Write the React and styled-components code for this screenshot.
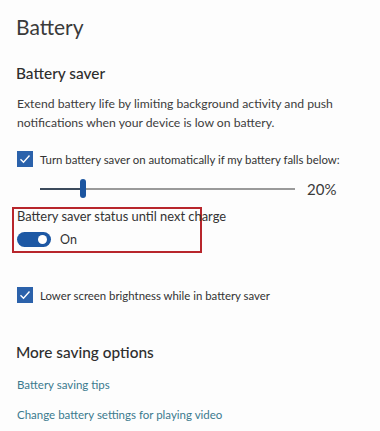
import React from "react";
import styled, { createGlobalStyle } from "styled-components";

const Global = createGlobalStyle`
  body {
    margin: 0;
    background: #fdfdfd;
    font-family: Lato, "Noto Sans", sans-serif;
    color: #333;
  }
`;

const Page = styled.div`
  width: 380px;
  height: 431px;
  padding: 12px 0 0 16px;
  box-sizing: border-box;
  overflow: hidden;
`;

const Title = styled.h1`
  margin: 0;
  font-size: 21px;
  line-height: 30px;
  font-weight: 400;
  color: #3a3a3a;
`;

const Heading = styled.h2`
  margin: ${(p) => p.$top}px 0 0;
  font-size: 15.4px;
  line-height: 22px;
  font-weight: 500;
  color: #2e2e2e;
`;

const Desc = styled.p`
  margin: 10px 0 0 1px;
  font-size: 12.2px;
  line-height: 19px;
  color: #3c3c3c;
  white-space: nowrap;
`;

const CheckRow = styled.label`
  display: flex;
  align-items: center;
  gap: 7px;
  height: 20px;
  margin: ${(p) => p.$top}px 0 0 1px;
  font-size: 11.4px;
  color: #333;
  white-space: nowrap;
`;

const Box = styled.span`
  width: 16px;
  height: 16px;
  background: #2b62ab;
  display: flex;
  align-items: center;
  justify-content: center;
  flex: none;
`;

const SliderRow = styled.div`
  display: flex;
  align-items: center;
  height: 20px;
  margin: 10px 0 0 24px;
`;

const Track = styled.div`
  position: relative;
  width: 255px;
  height: 2px;
  background: #9a9a9a;
`;

const Filled = styled.div`
  height: 100%;
  background: #3c4a5c;
`;

const Thumb = styled.div`
  position: absolute;
  top: -9px;
  width: 6px;
  height: 19px;
  border-radius: 3px;
  background: #1c55a0;
`;

const Value = styled.span`
  margin-left: 12px;
  font-size: 15px;
  color: #3a3a3a;
`;

const Highlight = styled.div`
  width: 190px;
  box-sizing: border-box;
  margin: 8px 0 0 -4px;
  border: 2px solid #b8262c;
  padding: 0 0 4px 3px;
`;

const Label = styled.div`
  font-size: 12.9px;
  line-height: 15px;
  color: #333;
  white-space: nowrap;
`;

const ToggleRow = styled.div`
  display: flex;
  align-items: center;
  gap: 9px;
  margin-top: 8px;
  font-size: 12.5px;
  color: #333;
`;

const Toggle = styled.span`
  position: relative;
  width: 34px;
  height: 15px;
  border-radius: 8px;
  background: #1d58a4;
  &::after {
    content: "";
    position: absolute;
    right: 4px;
    top: 3px;
    width: 9px;
    height: 9px;
    border-radius: 50%;
    background: #fff;
  }
`;

const Link = styled.a`
  display: block;
  margin: ${(p) => p.$top}px 0 0 1px;
  font-size: 11.5px;
  line-height: 18px;
  color: #3b7a8e;
  text-decoration: none;
`;

const Check = () => (
  <Box>
    <svg width="12" height="12" viewBox="0 0 12 12">
      <path d="M1.5 6.2 L4.5 9.2 L10.5 2.5" fill="none" stroke="#fff" strokeWidth="1.4" />
    </svg>
  </Box>
);

export default function App() {
  return (
    <Page>
      <Global />
      <Title>Battery</Title>
      <Heading $top={20}>Battery saver</Heading>
      <Desc>
        Extend battery life by limiting background activity and push
        <br />
        notifications when your device is low on battery.
      </Desc>
      <CheckRow $top={17}>
        <Check />
        Turn battery saver on automatically if my battery falls below:
      </CheckRow>
      <SliderRow>
        <Track>
          <Filled style={{ width: "42px" }} />
          <Thumb style={{ left: "40px" }} />
        </Track>
        <Value>20%</Value>
      </SliderRow>
      <Highlight>
        <Label>Battery saver status until next charge</Label>
        <ToggleRow>
          <Toggle />
          On
        </ToggleRow>
      </Highlight>
      <CheckRow $top={32}>
        <Check />
        Lower screen brightness while in battery saver
      </CheckRow>
      <Heading $top={36}>More saving options</Heading>
      <Link $top={13}>Battery saving tips</Link>
      <Link $top={12}>Change battery settings for playing video</Link>
    </Page>
  );
}
